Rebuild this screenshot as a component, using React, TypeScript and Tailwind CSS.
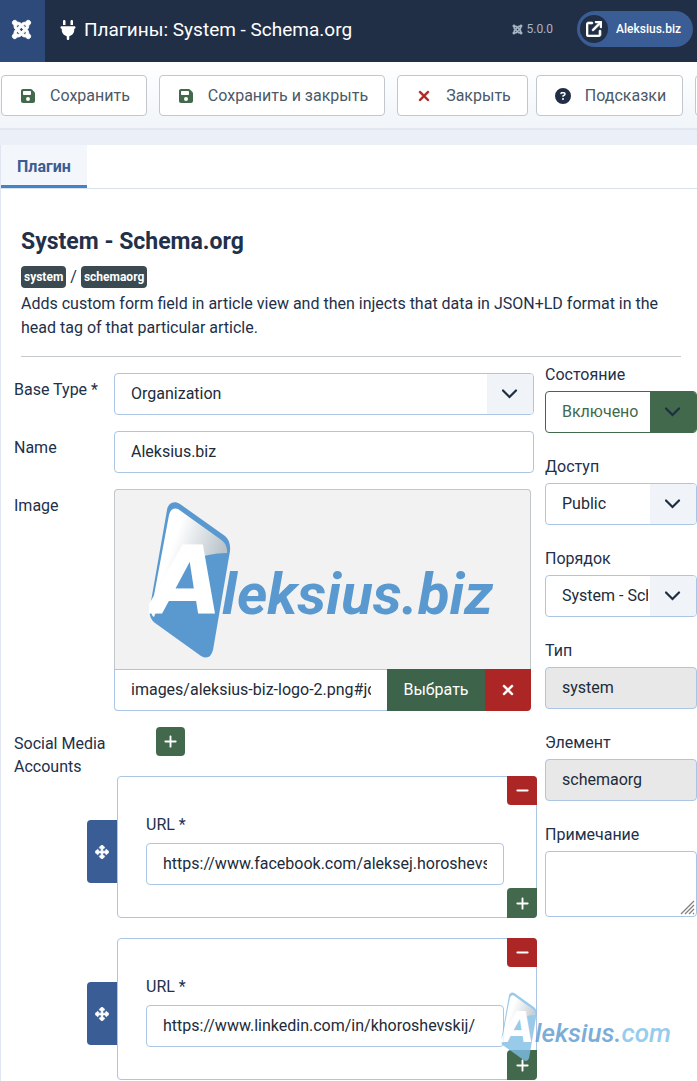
import React from 'react';
import {
  FaJoomla,
  FaPlug,
  FaFloppyDisk,
  FaXmark,
  FaCircleQuestion,
  FaArrowUpRightFromSquare,
  FaPlus,
  FaMinus,
  FaUpDownLeftRight,
} from 'react-icons/fa6';

const fieldClass =
  'block h-[42px] w-full rounded-[4px] border border-[#abc6e4] px-4 pb-[2px] text-[#212b3a] outline-none';
const toolbarButton =
  'flex h-[41px] shrink-0 items-center rounded-[4px] border border-[#c0c7cd] bg-white pr-4 pl-[18px] text-[#4b5968]';

interface SelectProps {
  id: string;
  options: string[];
  enabled?: boolean;
}

const Select: React.FC<SelectProps> = ({ id, options, enabled = false }) => (
  <div className="relative">
    <select
      id={id}
      className={`block h-[42px] w-full appearance-none rounded-[4px] border bg-white pr-12 pl-4 outline-none ${
        enabled ? 'border-[#42694c] text-[#42694c]' : 'border-[#abc6e4] text-[#212b3a]'
      }`}
    >
      {options.map((option) => (
        <option key={option}>{option}</option>
      ))}
    </select>
    <span
      className={`pointer-events-none absolute inset-y-px right-px flex w-[46px] items-center justify-center rounded-r-[3px] ${
        enabled ? 'bg-[#42694c]' : 'bg-[#f0f4f8]'
      }`}
    >
      <svg width="16" height="10" viewBox="0 0 16 10" fill="none" stroke="#1d2d42" strokeWidth="2.2">
        <path d="M1 1.5 7.5 8 14 1.5" strokeLinecap="round" />
      </svg>
    </span>
  </div>
);

interface EmblemProps {
  id: string;
  fill: string;
}

const Emblem: React.FC<EmblemProps> = ({ id, fill }) => (
  <g>
    <defs>
      <linearGradient id={id} x1="0.1" y1="0.1" x2="0.9" y2="0.5">
        <stop offset="0.3" stopColor="#ffffff" />
        <stop offset="1" stopColor="#b9c3ca" />
      </linearGradient>
    </defs>
    <path d="M18 9C19 2 25 -1 31 3L76 35Q82 40 81 50L64 149Q61 160 52 155L6 122Q-1 117 1 106Z" fill={fill} />
    <path d="M20 14Q22 6 29 8L71 38Q79 43 78 52Q38 53 21 77L5 116Q1 114 3 105Z" fill={`url(#${id})`} />
  </g>
);

interface SidebarFieldProps {
  id: string;
  label: string;
  children: React.ReactNode;
}

const SidebarField: React.FC<SidebarFieldProps> = ({ id, label, children }) => (
  <div className="mb-[22px]">
    <label htmlFor={id} className="mb-1 block leading-6">
      {label}
    </label>
    {children}
  </div>
);

interface SocialAccountProps {
  id: string;
  url: string;
}

const SocialAccount: React.FC<SocialAccountProps> = ({ id, url }) => (
  <div className="mb-5 flex items-start">
    <button
      type="button"
      aria-label="Move"
      className="mt-11 flex h-[63px] w-[30px] items-center justify-center rounded-l-[4px] bg-[#395d94] text-white"
    >
      <FaUpDownLeftRight size={14} stroke="currentColor" strokeWidth={24} />
    </button>
    <div className="relative min-w-0 flex-1 rounded-[4px] border border-[#abc6e4] pt-9 pr-8 pb-8 pl-7">
      <label htmlFor={id} className="mb-[6px] block leading-6">
        URL *
      </label>
      <input id={id} type="url" defaultValue={url} className={`${fieldClass} bg-white`} />
      <button
        type="button"
        aria-label="Remove"
        className="absolute -top-px -right-px flex h-[29px] w-[30px] items-center justify-center rounded-tr-[4px] rounded-bl-[4px] bg-[#ab2624] text-white"
      >
        <FaMinus size={15} />
      </button>
      <button
        type="button"
        aria-label="Add"
        className="absolute -right-px -bottom-px flex h-[30px] w-[30px] items-center justify-center rounded-tl-[4px] rounded-br-[4px] bg-[#42694c] text-white"
      >
        <FaPlus size={15} />
      </button>
    </div>
  </div>
);

const App: React.FC = () => {
  return (
    <div className="min-h-screen overflow-hidden bg-[#ebeff8] font-[Roboto,sans-serif] text-base text-[#22304a]">
      {/* Header */}
      <header className="flex h-[62px] bg-[#212f46] text-white">
        <a
          href="#home"
          aria-label="Joomla"
          className="flex w-[45px] items-center justify-center bg-[#2e4a7a] pr-[3px] pb-1"
        >
          <FaJoomla size={21} stroke="currentColor" strokeWidth={24} />
        </a>
        <h1 className="ml-[13px] flex items-center gap-[6px] pb-[2px] text-[19px] font-normal">
          <FaPlug size={20} />
          Плагины: System - Schema.org
        </h1>
        <div className="ml-auto flex items-center pb-1 text-xs">
          <span className="mr-6 flex items-center gap-[3px] text-[#a9b6c8]">
            <FaJoomla size={11} stroke="currentColor" strokeWidth={20} />
            5.0.0
          </span>
          <a
            href="#site"
            className="mr-1 flex h-9 items-center gap-2 rounded-full bg-[#395d94] pr-3 pl-[3px] font-medium"
          >
            <span className="flex h-7 w-7 items-center justify-center rounded-full bg-[#212f46]">
              <FaArrowUpRightFromSquare size={16} stroke="currentColor" strokeWidth={20} />
            </span>
            Aleksius.biz
          </a>
        </div>
      </header>

      {/* Toolbar */}
      <div className="flex gap-2 border-b-2 border-[#e0e7ef] bg-linear-to-b from-white to-[#f1f5f9] pt-[13px] pb-3 pl-px">
        <div className="flex shrink-0 gap-3">
          <button type="button" className={toolbarButton}>
            <FaFloppyDisk size={16} className="mr-[14px] text-[#42694c]" />
            Сохранить
          </button>
          <button type="button" className={toolbarButton}>
            <FaFloppyDisk size={16} className="mr-[14px] text-[#42694c]" />
            Сохранить и закрыть
          </button>
          <button type="button" className={toolbarButton}>
            <FaXmark size={16} stroke="currentColor" strokeWidth={16} className="mr-[14px] text-[#ab2624]" />
            Закрыть
          </button>
        </div>
        <div className="flex shrink-0 gap-3">
          <button type="button" className={toolbarButton}>
            <FaCircleQuestion size={16} className="mr-[14px] text-[#212f46]" />
            Подсказки
          </button>
          <button type="button" aria-label="Help" className={toolbarButton} />
        </div>
      </div>

      <main className="mt-[15px] border-l border-[#dfe6f1] bg-white">
        <div role="tablist" className="flex border-b border-[#d8e1ea]">
          <button
            type="button"
            role="tab"
            aria-selected="true"
            className="h-[43px] border-b-3 border-[#4384c4] bg-[#f3f6fa] px-4 pt-[3px] font-bold text-[#395d94]"
          >
            Плагин
          </button>
        </div>

        <div className="mr-4 ml-5 border-b border-[#c3cbce] pt-[37px] pb-4">
          <h2 className="mb-[7px] text-[23px] leading-8 font-bold">System - Schema.org</h2>
          <div className="flex items-center gap-1 leading-6">
            <span className="rounded-[4px] bg-[#3a4a50] px-[3px] text-xs leading-[22px] font-bold text-white">system</span>
            /
            <span className="rounded-[4px] bg-[#3a4a50] px-[3px] text-xs leading-[22px] font-bold text-white">schemaorg</span>
          </div>
          <p className="mt-[3px] leading-6">
            Adds custom form field in article view and then injects that data in JSON+LD format in the head tag of that
            particular article.
          </p>
        </div>

        <div className="grid grid-cols-[minmax(0,1fr)_152px] gap-x-[11px] pl-[13px]">
          {/* Plugin options */}
          <div className="pt-4">
            <div className="mb-4 flex">
              <label htmlFor="base-type" className="w-[100px] shrink-0 pt-[5px] leading-[23px]">
                Base Type *
              </label>
              <div className="min-w-0 flex-1">
                <Select id="base-type" options={['Organization', 'Person']} />
              </div>
            </div>
            <div className="mb-4 flex">
              <label htmlFor="name" className="w-[100px] shrink-0 pt-[5px] leading-[23px]">
                Name
              </label>
              <input id="name" defaultValue="Aleksius.biz" className={`${fieldClass} min-w-0 flex-1 bg-white`} />
            </div>
            <div className="mb-4 flex">
              <label htmlFor="image" className="w-[100px] shrink-0 pt-[5px] leading-[23px]">
                Image
              </label>
              <div className="mr-[3px] min-w-0 flex-1">
                <div className="flex h-[180px] items-start justify-center rounded-t-[4px] border border-b-0 border-[#c0c7cd] bg-[#f2f2f2] pt-[11px]">
                  <svg width="347" height="160" viewBox="0 0 347 160" role="img" aria-label="Aleksius.biz">
                    <Emblem id="logo-sheen" fill="#5a99cf" />
                    <text
                      x="1"
                      y="113"
                      fontFamily="DejaVu Sans"
                      fontSize="94"
                      fontWeight="700"
                      fontStyle="italic"
                      fill="#ffffff"
                    >
                      A
                    </text>
                    <text
                      x="73"
                      y="113"
                      fontFamily="Roboto"
                      fontSize="58"
                      fontWeight="700"
                      fontStyle="italic"
                      fill="#5a99cf"
                    >
                      leksius.biz
                    </text>
                  </svg>
                </div>
                <div className="flex">
                  <input
                    id="image"
                    defaultValue="images/aleksius-biz-logo-2.png#joomlaImage"
                    className="block h-[42px] min-w-0 flex-1 rounded-bl-[4px] border border-r-0 border-[#abc6e4] px-4 pb-[2px] text-[#212b3a] outline-none"
                  />
                  <button type="button" className="h-[42px] w-[98px] bg-[#3d634b] text-white">
                    Выбрать
                  </button>
                  <button
                    type="button"
                    aria-label="Clear"
                    className="flex h-[42px] w-[46px] items-center justify-center rounded-br-[4px] bg-[#ab2624] text-white"
                  >
                    <FaXmark size={16} stroke="currentColor" strokeWidth={20} />
                  </button>
                </div>
              </div>
            </div>
            <div className="flex items-start">
              <span className="w-[100px] shrink-0 pt-[5px] leading-[23px]">Social Media Accounts</span>
              <button
                type="button"
                aria-label="Add account"
                className="ml-[42px] flex h-[29px] w-[29px] items-center justify-center rounded-[4px] bg-[#42694c] text-white"
              >
                <FaPlus size={15} />
              </button>
            </div>
            <div className="-mt-[2px] -mr-[3px] ml-[73px]">
              <SocialAccount id="url-1" url="https://www.facebook.com/aleksej.horoshevskij" />
              <SocialAccount id="url-2" url="https://www.linkedin.com/in/khoroshevskij/" />
            </div>
          </div>

          {/* Sidebar */}
          <div className="pt-[6px]">
            <SidebarField id="state" label="Состояние">
              <Select id="state" options={['Включено', 'Выключено']} enabled />
            </SidebarField>
            <SidebarField id="access" label="Доступ">
              <Select id="access" options={['Public', 'Registered']} />
            </SidebarField>
            <SidebarField id="order" label="Порядок">
              <Select id="order" options={['System - Schema.org']} />
            </SidebarField>
            <SidebarField id="type" label="Тип">
              <input id="type" readOnly value="system" className={`${fieldClass} bg-[#e8e8e8]`} />
            </SidebarField>
            <SidebarField id="element" label="Элемент">
              <input id="element" readOnly value="schemaorg" className={`${fieldClass} bg-[#e8e8e8]`} />
            </SidebarField>
            <SidebarField id="note" label="Примечание">
              <div className="relative">
                <textarea
                  id="note"
                  className="block h-[66px] w-full resize-none rounded-[4px] border border-[#abc6e4] px-4 py-2 outline-none"
                />
                <svg
                  width="15"
                  height="15"
                  viewBox="0 0 15 15"
                  stroke="#85807c"
                  strokeWidth="1.3"
                  className="pointer-events-none absolute right-[2px] bottom-[2px]"
                >
                  <path d="M1 14 14 1M5 14l9-9M9 14l5-5M13 14l1-1" />
                </svg>
              </div>
            </SidebarField>

            {/* Watermark */}
            <div className="relative">
              <svg
                width="176"
                height="72"
                viewBox="0 0 176 72"
                role="img"
                aria-label="Aleksius.com"
                className="pointer-events-none absolute top-[53px] right-[20px] opacity-80"
              >
                <g transform="scale(0.44)">
                  <Emblem id="watermark-sheen" fill="#7fbde6" />
                </g>
                <text
                  x="1"
                  y="50"
                  fontFamily="DejaVu Sans"
                  fontSize="42"
                  fontWeight="700"
                  fontStyle="italic"
                  fill="#ffffff"
                >
                  A
                </text>
                <text
                  x="34"
                  y="50"
                  fontFamily="Roboto"
                  fontSize="26"
                  fontWeight="500"
                  fontStyle="italic"
                  fill="#5a99cf"
                >
                  leksius.<tspan fill="#7cc0ea">com</tspan>
                </text>
              </svg>
            </div>
          </div>
        </div>
      </main>
    </div>
  );
};

export default App;
